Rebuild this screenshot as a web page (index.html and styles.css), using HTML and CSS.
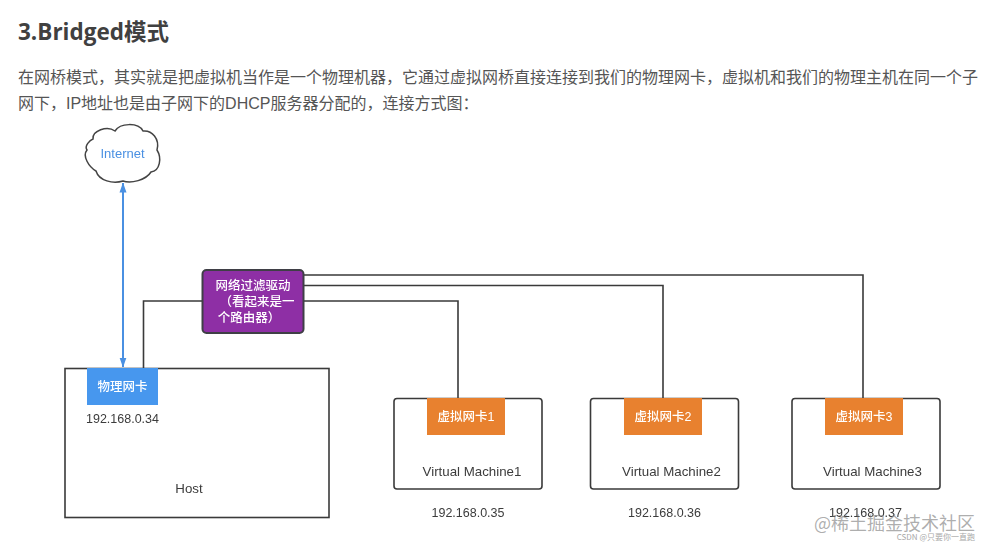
FILE: index.html
```html
<!DOCTYPE html>
<html lang="zh">
<head>
<meta charset="utf-8">
<title>3.Bridged模式</title>
<link rel="stylesheet" href="styles.css">
</head>
<body>
<main class="page">
  <h2 class="title">3.Bridged模式</h2>
  <p class="intro">在网桥模式，其实就是把虚拟机当作是一个物理机器，它通过虚拟网桥直接连接到我们的物理网卡，虚拟机和我们的物理主机在同一个子网下，IP地址也是由子网下的DHCP服务器分配的，连接方式图：</p>
  <svg class="diagram" viewBox="0 120 993 431" width="993" height="431" aria-label="Bridged network diagram">
    <defs>
      <marker id="arrow" viewBox="0 0 10 8" refX="9.500" refY="4" markerWidth="10" markerHeight="8" markerUnits="userSpaceOnUse" orient="auto-start-reverse">
        <path class="arrowhead" d="M0 0.500 L10 4 L0 7.500 Z"/>
      </marker>
    </defs>

    <path class="cloud" d="M93 139 C92 131 107 125 115 131 C120 123 138 122 143 131 C152 130 160 139 157 150 C162 158 160 171 151 172 C146 180 131 184 123 181 C113 184 99 181 96 171 C89 167 82 156 87 150 C84 146 90 140 93 139 Z"/>
    <text class="t-internet" x="122.500" y="157.500">Internet</text>
    <line class="link-blue" x1="123" y1="183" x2="123" y2="367" marker-start="url(#arrow)" marker-end="url(#arrow)"/>

    <path class="wire" d="M304 275 H863 V399"/>
    <path class="wire" d="M304 285.500 H663 V399"/>
    <path class="wire" d="M304 301 H458 V399"/>
    <path class="wire" d="M203 301 H143.500 V369"/>

    <rect class="box" x="65" y="368.500" width="264" height="149"/>
    <rect class="box" x="394" y="398.500" width="148" height="90.500" rx="3"/>
    <rect class="box" x="590.500" y="398.500" width="148" height="90.500" rx="3"/>
    <rect class="box" x="792" y="398.500" width="148" height="90.500" rx="3"/>

    <rect class="router" x="202.500" y="270" width="101" height="63" rx="4"/>
    <text class="t-white" x="253" y="290">网络过滤驱动</text>
    <text class="t-white" x="257" y="306">（看起来是一</text>
    <text class="t-white" x="249" y="322">个路由器）</text>

    <rect class="nic-blue" x="87" y="368" width="71" height="37"/>
    <text class="t-white" x="122.500" y="391">物理网卡</text>
    <text class="t-dark" x="122.500" y="422.500">192.168.0.34</text>
    <text class="t-label" x="189" y="492.500">Host</text>

    <rect class="nic-orange" x="427" y="398" width="78" height="37"/>
    <text class="t-white" x="466" y="421">虚拟网卡1</text>
    <text class="t-label" x="472" y="476">Virtual Machine1</text>
    <text class="t-dark" x="468" y="516.500">192.168.0.35</text>

    <rect class="nic-orange" x="624" y="398" width="78" height="37"/>
    <text class="t-white" x="663" y="421">虚拟网卡2</text>
    <text class="t-label" x="671.500" y="476">Virtual Machine2</text>
    <text class="t-dark" x="664.500" y="516.500">192.168.0.36</text>

    <rect class="nic-orange" x="825" y="398" width="78" height="37"/>
    <text class="t-white" x="864" y="421">虚拟网卡3</text>
    <text class="t-label" x="872.500" y="476">Virtual Machine3</text>
    <text class="t-dark" x="865.500" y="516.500">192.168.0.37</text>
  </svg>
  <div class="watermark" aria-label="watermark">
    <span class="wm-main">@稀土掘金技术社区</span>
    <span class="wm-sub">CSDN @只要你一直跑</span>
  </div>
</main>
</body>
</html>
```

FILE: styles.css
```css
* { box-sizing: border-box; }

html, body {
  margin: 0;
  background: #fff;
}

.page {
  position: relative;
  width: 993px;
  height: 551px;
  overflow: hidden;
  padding-top: 17px;
  font-family: "Liberation Sans", "Noto Sans CJK SC", sans-serif;
}

.title {
  margin: 0 0 0 18px;
  font-family: "Open Sans", "Noto Sans CJK SC", sans-serif;
  font-size: 22.500px;
  line-height: 30px;
  font-weight: 700;
  color: #404040;
}

.intro {
  margin: 18px 0 0 18px;
  width: 965px;
  font-size: 16px;
  line-height: 26px;
  color: #555;
}

.diagram {
  display: block;
  margin-top: 3px;
  filter: blur(0.35px);
}

.cloud {
  fill: #fff;
  stroke: #444;
  stroke-width: 1.5;
}

.link-blue {
  stroke: #4a90e2;
  stroke-width: 2;
}

.arrowhead { fill: #4a90e2; }

.wire, .box {
  fill: none;
  stroke: #3a3a3a;
  stroke-width: 1.6;
}

.router {
  fill: #8e2fa5;
  stroke: #3f3f46;
  stroke-width: 2;
}

.nic-blue { fill: #4797ee; }
.nic-orange { fill: #e8812f; }

.diagram text {
  font-family: "Liberation Sans", "Noto Sans CJK SC", sans-serif;
  text-anchor: middle;
  font-size: 12.500px;
}

.diagram .t-white { fill: #fff; font-weight: 500; }
.diagram .t-dark { fill: #3c3c3c; }
.diagram .t-label { fill: #3c3c3c; font-size: 13.300px; }
.diagram .t-internet { fill: #4a90e2; font-size: 13px; }

.watermark {
  position: absolute;
  right: 18px;
  top: 515px;
  width: 160px;
  display: flex;
  flex-direction: column;
  align-items: flex-end;
  font-family: "Noto Sans CJK SC", sans-serif;
}

.wm-main {
  font-size: 18px;
  line-height: 15px;
  white-space: nowrap;
  color: rgba(120, 120, 120, 0.6);
}

.wm-sub {
  margin-top: 2px;
  font-size: 8px;
  line-height: 10px;
  white-space: nowrap;
  color: #a8a8a8;
}
```
